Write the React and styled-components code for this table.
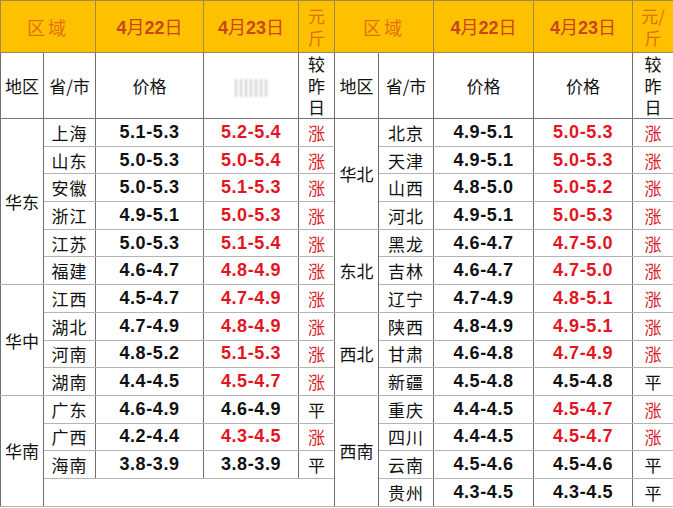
import React from "react";
import styled, { createGlobalStyle } from "styled-components";

const Global = createGlobalStyle`
  html, body { margin: 0; padding: 0; background: #fff; }
  body { font-family: "Noto Sans CJK SC", "Liberation Sans", sans-serif; }
`;

const Table = styled.table`
  border-collapse: collapse;
  table-layout: fixed;
  width: 673px;
  color: #111;
  font-family: "Noto Sans CJK SC", sans-serif;
  td {
    padding: 0;
    text-align: center;
    vertical-align: middle;
    border-top: 1px solid #b4b4b4;
    border-bottom: 1px solid #b4b4b4;
    border-left: 1px solid #6e6e6e;
    border-right: 1px solid #6e6e6e;
  }
`;

const HeadRow = styled.tr`
  height: 52px;
  background: #ffc000;
  td {
    border-color: #a08a4a;
  }
`;

const SubRow = styled.tr`
  height: 66px;
  td { border-bottom-color: #777; }
`;

const DataRow = styled.tr`
  height: 27.7px;
`;

const HeadText = styled.td`
  color: ${(p) => (p.$tone === "date" ? "#c9461a" : "#e2700e")};
  font-size: ${(p) => (p.$small ? "17px" : "18px")};
  letter-spacing: ${(p) => (p.$wide ? "3px" : "0")};
  line-height: 22px;
`;

const DateNum = styled.span`
  font-family: "Liberation Sans", Arial, sans-serif;
  font-weight: 700;
  font-size: 18px;
`;

const SubCell = styled.td`
  font-size: 17px;
  line-height: 21.5px;
`;

const Placeholder = styled.span`
  display: inline-block;
  width: 32px;
  height: 18px;
  vertical-align: middle;
  background: repeating-linear-gradient(
    90deg,
    rgba(120, 120, 120, 0.5) 0 2px,
    rgba(255, 255, 255, 0) 2px 5px
  );
  filter: blur(0.8px);
  opacity: 0.75;
`;

const RegionCell = styled.td`
  font-size: 17px;
`;

const ProvCell = styled.td`
  font-size: 17px;
  letter-spacing: 1px;
`;

const PriceCell = styled.td`
  font-family: "Liberation Sans", Arial, sans-serif;
  font-weight: 700;
  font-size: 18px;
  letter-spacing: 0.6px;
  color: ${(p) => (p.$up ? "#e3161f" : "#111")};
`;

const TrendCell = styled.td`
  font-size: 17px;
  color: ${(p) => (p.$up ? "#d8232a" : "#111")};
`;

const BlankCell = styled.td``;

const left = [
  ["华东", [
    ["上海", "5.1-5.3", "5.2-5.4", "涨"],
    ["山东", "5.0-5.3", "5.0-5.4", "涨"],
    ["安徽", "5.0-5.3", "5.1-5.3", "涨"],
    ["浙江", "4.9-5.1", "5.0-5.3", "涨"],
    ["江苏", "5.0-5.3", "5.1-5.4", "涨"],
    ["福建", "4.6-4.7", "4.8-4.9", "涨"],
  ]],
  ["华中", [
    ["江西", "4.5-4.7", "4.7-4.9", "涨"],
    ["湖北", "4.7-4.9", "4.8-4.9", "涨"],
    ["河南", "4.8-5.2", "5.1-5.3", "涨"],
    ["湖南", "4.4-4.5", "4.5-4.7", "涨"],
  ]],
  ["华南", [
    ["广东", "4.6-4.9", "4.6-4.9", "平"],
    ["广西", "4.2-4.4", "4.3-4.5", "涨"],
    ["海南", "3.8-3.9", "3.8-3.9", "平"],
    null,
  ]],
];

const right = [
  ["华北", [
    ["北京", "4.9-5.1", "5.0-5.3", "涨"],
    ["天津", "4.9-5.1", "5.0-5.3", "涨"],
    ["山西", "4.8-5.0", "5.0-5.2", "涨"],
    ["河北", "4.9-5.1", "5.0-5.3", "涨"],
  ]],
  ["东北", [
    ["黑龙", "4.6-4.7", "4.7-5.0", "涨"],
    ["吉林", "4.6-4.7", "4.7-5.0", "涨"],
    ["辽宁", "4.7-4.9", "4.8-5.1", "涨"],
  ]],
  ["西北", [
    ["陕西", "4.8-4.9", "4.9-5.1", "涨"],
    ["甘肃", "4.6-4.8", "4.7-4.9", "涨"],
    ["新疆", "4.5-4.8", "4.5-4.8", "平"],
  ]],
  ["西南", [
    ["重庆", "4.4-4.5", "4.5-4.7", "涨"],
    ["四川", "4.4-4.5", "4.5-4.7", "涨"],
    ["云南", "4.5-4.6", "4.5-4.6", "平"],
    ["贵州", "4.3-4.5", "4.3-4.5", "平"],
  ]],
];

function flatten(groups) {
  const rows = [];
  groups.forEach(([region, items]) => {
    items.forEach((item, i) => {
      rows.push({ region: i === 0 ? region : null, span: items.length, item });
    });
  });
  return rows;
}

function Side({ row }) {
  return (
    <>
      {row.region && <RegionCell rowSpan={row.span}>{row.region}</RegionCell>}
      {row.item ? (
        <>
          <ProvCell>{row.item[0]}</ProvCell>
          <PriceCell>{row.item[1]}</PriceCell>
          <PriceCell $up={row.item[3] === "涨"}>{row.item[2]}</PriceCell>
          <TrendCell $up={row.item[3] === "涨"}>{row.item[3]}</TrendCell>
        </>
      ) : (
        <BlankCell colSpan={4} />
      )}
    </>
  );
}

function DateHead({ day }) {
  return (
    <HeadText $tone="date">
      <DateNum>4</DateNum>月<DateNum>{day}</DateNum>日
    </HeadText>
  );
}

export default function App() {
  const l = flatten(left);
  const r = flatten(right);
  return (
    <>
      <Global />
      <Table>
        <colgroup>
          <col style={{ width: 43 }} />
          <col style={{ width: 52 }} />
          <col style={{ width: 108 }} />
          <col style={{ width: 95 }} />
          <col style={{ width: 36 }} />
          <col style={{ width: 44 }} />
          <col style={{ width: 55 }} />
          <col style={{ width: 100 }} />
          <col style={{ width: 99 }} />
          <col style={{ width: 41 }} />
        </colgroup>
        <tbody>
          <HeadRow>
            <HeadText colSpan={2} $wide>区域</HeadText>
            <DateHead day="22" />
            <DateHead day="23" />
            <HeadText $small>元<br />斤</HeadText>
            <HeadText colSpan={2} $wide>区域</HeadText>
            <DateHead day="22" />
            <DateHead day="23" />
            <HeadText $small>元/<br />斤</HeadText>
          </HeadRow>
          <SubRow>
            <SubCell>地区</SubCell>
            <SubCell>省/市</SubCell>
            <SubCell>价格</SubCell>
            <SubCell><Placeholder /></SubCell>
            <SubCell>较<br />昨<br />日</SubCell>
            <SubCell>地区</SubCell>
            <SubCell>省/市</SubCell>
            <SubCell>价格</SubCell>
            <SubCell>价格</SubCell>
            <SubCell>较<br />昨<br />日</SubCell>
          </SubRow>
          {l.map((row, i) => (
            <DataRow key={i}>
              <Side row={row} />
              <Side row={r[i]} />
            </DataRow>
          ))}
        </tbody>
      </Table>
    </>
  );
}
